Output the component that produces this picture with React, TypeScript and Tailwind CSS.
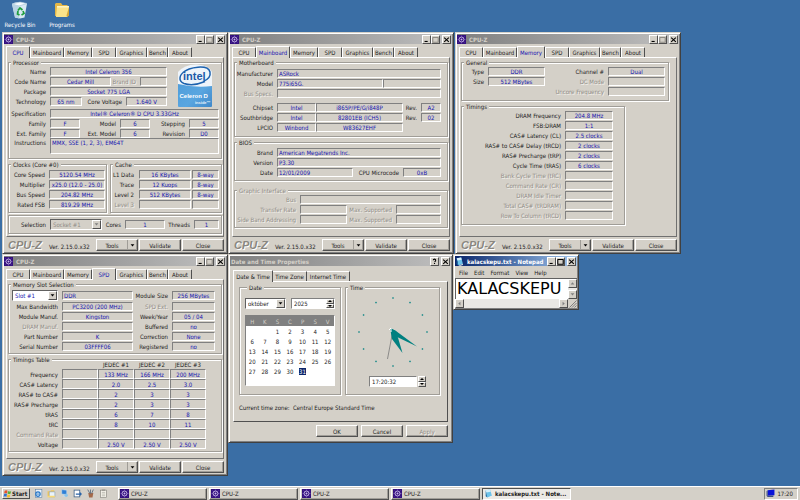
import { useId, type ReactNode } from "react";

const sunken = "border border-t-[#808080] border-l-[#808080] border-r-white border-b-white";
const raised = "border border-t-white border-l-white border-r-[#505050] border-b-[#505050]";
const dim = "text-[#8f8c86] [text-shadow:1px_1px_0_#f4f2ee]";

function CpuIcon() {
  return (
    <svg viewBox="0 0 16 16" className="size-[9px] shrink-0" aria-hidden="true">
      <rect width="16" height="16" fill="#34107e" />
      <circle cx="8" cy="8" r="4.4" fill="none" stroke="#cdbfe8" strokeWidth="1.6" />
      <circle cx="8" cy="8" r="1.7" fill="#c9b8ea" />
      <path d="M8 1v2.500M8 12.500V15M1 8h2.500M12.500 8H15M3 3l2 2M13 3l-2 2M3 13l2-2M13 13l-2-2" stroke="#8a6cc8" strokeWidth="1.2" />
    </svg>
  );
}

function NoteIcon() {
  return (
    <svg viewBox="0 0 16 16" className="size-[9px] shrink-0" aria-hidden="true">
      <path d="M3 2l8-1 3 11-8 3z" fill="#6cc3ea" />
      <path d="M3 2l8-1 1 4-8 1z" fill="#d6f0fb" />
      <path d="M3 2l3 13-3-2z" fill="#1d6fa8" />
      <path d="M7 15l7-3v2l-6 2z" fill="#e8eef2" />
    </svg>
  );
}

function Arrow({ dir = "down", gray = false }: { dir?: "up" | "down" | "left" | "right"; gray?: boolean }) {
  const d = {
    down: "M1 2h6L4 5.500z",
    up: "M1 5.500h6L4 2z",
    left: "M5.500 1v6L2 4z",
    right: "M2.500 1v6L6 4z",
  }[dir];
  return (
    <svg viewBox="0 0 8 8" className="size-[5px]" aria-hidden="true">
      <path d={d} fill={gray ? "#808080" : "#000"} />
    </svg>
  );
}

const glyphs = {
  Minimize: "M2 7h4",
  Maximize: "M1 2h7M1 1.500v6.500h7V1.500",
  Help: "M3 3q0-1.500 1.500-1.500T6 3 4.500 5M4.500 6.500v1.300",
  Close: "M1.500 2l6 5.500M7.500 2l-6 5.500",
};

function TitleButton({ kind, off = false }: { kind: keyof typeof glyphs; off?: boolean }) {
  return (
    <button aria-label={kind} className={`${raised} flex h-[9px] w-[9px] items-center justify-center bg-[#d4d0c8]`}>
      <svg viewBox="0 0 9 9" className="size-[7px]" fill="none" aria-hidden="true">
        <path d={glyphs[kind]} stroke={off ? "#8d8a84" : "#000"} strokeWidth="1.4" />
      </svg>
    </button>
  );
}

type WindowProps = {
  title: string;
  place: string;
  icon?: ReactNode;
  active?: boolean;
  help?: boolean;
  children: ReactNode;
};

function Window({ title, place, icon, active = false, help = false, children }: WindowProps) {
  return (
    <section
      className={`absolute flex flex-col border border-t-[#d4d0c8] border-l-[#d4d0c8] border-r-[#404040] border-b-[#404040] bg-[#d4d0c8] p-px shadow-[inset_1px_1px_0_#fff,inset_-1px_-1px_0_#808080] ${place}`}
    >
      <header
        className={`flex h-2.5 items-center gap-0.5 pr-px font-bold ${
          active
            ? "bg-linear-to-r from-[#0a246a] to-[#a6caf0] text-white"
            : "bg-linear-to-r from-[#808080] to-[#c0c0c0] text-[#d4d0c8]"
        }`}
      >
        {icon}
        <h2 className="flex-1 pl-px">{title}</h2>
        {help ? (
          <TitleButton kind="Help" />
        ) : (
          <div className="flex">
            <TitleButton kind="Minimize" />
            <TitleButton kind="Maximize" off={!active} />
          </div>
        )}
        <TitleButton kind="Close" />
      </header>
      {children}
    </section>
  );
}

type FieldProps = {
  label: string;
  value?: string;
  lw: string;
  w: string;
  off?: boolean;
  left?: boolean;
};

function Field({ label, value = "", lw, w, off = false, left = false }: FieldProps) {
  const id = useId();
  return (
    <>
      <label htmlFor={id} className={`${lw} pr-1 text-right whitespace-nowrap ${off ? dim : ""}`}>
        {label}
      </label>
      <input id={id} readOnly value={value} className={`${sunken} ${w} h-[9px] min-w-0 px-px text-[#1414b0] ${left ? "" : "text-center"}`} />
    </>
  );
}

function Box({ name, value = "", w, left = false }: { name: string; value?: string; w: string; left?: boolean }) {
  return (
    <input aria-label={name} readOnly value={value} className={`${sunken} ${w} h-[9px] min-w-0 px-px text-[#1414b0] ${left ? "" : "text-center"}`} />
  );
}

function Row({ children }: { children: ReactNode }) {
  return <div className="flex h-2.5 items-center">{children}</div>;
}

function Group({ title, off = false, className = "", children }: { title?: string; off?: boolean; className?: string; children: ReactNode }) {
  return (
    <fieldset className={`min-w-0 border border-[#a09d97] shadow-[inset_1px_1px_0_#fff,1px_1px_0_#fff] ${className}`}>
      {title && <legend className={`ml-0.5 bg-[#d4d0c8] px-0.5 ${off ? dim : ""}`}>{title}</legend>}
      {children}
    </fieldset>
  );
}

function Select({ name, value, w, off = false, blue = false }: { name: string; value: string; w: string; off?: boolean; blue?: boolean }) {
  return (
    <span className={`relative flex h-[11px] border border-t-[#606060] border-l-[#606060] border-r-white border-b-white ${w} ${off ? "bg-[#d4d0c8]" : "bg-white"}`}>
      <select aria-label={name} disabled={off} className={`w-full appearance-none pl-0.5 opacity-100 ${off ? "text-[#8f8c86]" : blue ? "text-[#1414b0]" : ""}`}>
        <option>{value}</option>
      </select>
      <span className={`${raised} pointer-events-none absolute top-0 right-0 bottom-0 flex w-[9px] items-center justify-center bg-[#d4d0c8]`}>
        <Arrow gray={off} />
      </span>
    </span>
  );
}

function Spinner({ name }: { name: string }) {
  return (
    <span className="flex w-2 flex-col">
      <button aria-label={`${name} up`} className={`${raised} flex flex-1 items-center justify-center bg-[#d4d0c8]`}>
        <svg viewBox="0 0 4 2" className="h-0.5 w-1" aria-hidden="true"><path d="M0 2h4L2 0z" /></svg>
      </button>
      <button aria-label={`${name} down`} className={`${raised} flex flex-1 items-center justify-center bg-[#d4d0c8]`}>
        <svg viewBox="0 0 4 2" className="h-0.5 w-1" aria-hidden="true"><path d="M0 0h4L2 2z" /></svg>
      </button>
    </span>
  );
}

function Button({ children, off = false }: { children: ReactNode; off?: boolean }) {
  return (
    <button disabled={off} className={`${raised} h-3 w-[42px] shadow-[inset_-1px_-1px_0_#a09d97] ${off ? dim : ""}`}>
      {children}
    </button>
  );
}

const tabs = [
  { name: "CPU", w: "w-6" },
  { name: "Mainboard", w: "w-[34px]" },
  { name: "Memory", w: "w-7" },
  { name: "SPD", w: "w-6" },
  { name: "Graphics", w: "w-[31px]" },
  { name: "Bench", w: "w-[21px]" },
  { name: "About", w: "w-6" },
];

function CpuZ({ tab, place, children }: { tab: string; place: string; children: ReactNode }) {
  return (
    <Window title="CPU-Z" place={`w-[226px] ${place}`} icon={<CpuIcon />}>
      <div className="flex flex-1 flex-col px-0.5 pt-0.5 pb-px">
        <div role="tablist" className="flex items-end">
          {tabs.map((t) => (
            <button
              key={t.name}
              role="tab"
              aria-selected={t.name === tab}
              className={`rounded-t-[1px] border-t border-r border-l border-t-white border-r-[#505050] border-l-white text-center ${t.w} ${
                t.name === tab ? "relative -mb-px h-3 bg-[#d4d0c8] text-[#1414b0]" : "h-2.5"
              }`}
            >
              {t.name}
            </button>
          ))}
        </div>
        <div className="flex min-h-[180px] flex-col gap-0.5 border border-t-white border-l-white border-r-[#707070] border-b-[#707070] px-px pt-px">
          {children}
        </div>
        <footer className="flex items-center gap-px pt-0.5">
          <span className="w-10 pl-0.5 font-['Liberation_Sans'] text-[11px] leading-3 font-bold text-[#8a8780] italic [text-shadow:1px_1px_0_#fff]">
            CPU-Z
          </span>
          <span className="flex-1 pt-0.5 pl-0.5">Ver. 2.15.0.x32</span>
          <div className={`${raised} flex h-3 w-[42px] shadow-[inset_-1px_-1px_0_#a09d97]`}>
            <button className="flex-1">Tools</button>
            <button aria-label="More tools" className="flex w-2.5 items-center justify-center border-l border-[#a09d97]">
              <Arrow />
            </button>
          </div>
          <Button>Validate</Button>
          <Button>Close</Button>
        </footer>
      </div>
    </Window>
  );
}

function IntelLogo() {
  return (
    <svg viewBox="0 0 36 44" className="h-11 w-9" role="img" aria-label="Intel Celeron D inside">
      <defs>
        <linearGradient id="cel" x1="0" y1="0" x2="1" y2="1">
          <stop offset="0" stopColor="#4c9ad8" />
          <stop offset="0.6" stopColor="#5aa6e0" />
          <stop offset="1" stopColor="#3f88c9" />
        </linearGradient>
      </defs>
      <rect x="1" y="9" width="34" height="34" rx="1" fill="url(#cel)" />
      <path d="M1 8Q8 0 20 0.500T35 8v14Q18 24 1 20z" fill="#eef4fa" />
      <path d="M6 8.500C12 3 31 0 33 8c1 5-3 8-7 9.500M8 7C2 11 1 17 7 19.500c6 2 14 1 21-2" fill="none" stroke="#1d62ae" strokeWidth="1.500" />
      <text x="6" y="15.500" fontFamily="Liberation Sans" fontWeight="bold" fontSize="11" fill="#1a5aa8">intel</text>
      <text x="2.500" y="34" fontFamily="Liberation Sans" fontWeight="bold" fontSize="6" fill="#fff">Celeron D</text>
      <text x="18" y="40" fontFamily="Liberation Sans" fontWeight="bold" fontSize="4" fill="#e6f2fc">inside™</text>
    </svg>
  );
}

function CpuPage() {
  return (
    <>
      <Group title="Processor">
        <div className="flex">
          <div className="w-[158px]">
            <Row><Field label="Name" value="Intel Celeron 356" lw="w-[41px]" w="flex-1" /></Row>
            <Row>
              <Field label="Code Name" value="Cedar Mill" lw="w-[41px]" w="w-[61px]" />
              <Field label="Brand ID" off lw="flex-1" w="w-[27px]" />
            </Row>
            <Row><Field label="Package" value="Socket 775 LGA" lw="w-[41px]" w="flex-1" /></Row>
            <Row>
              <Field label="Technology" value="65 nm" lw="w-[41px]" w="w-8" />
              <Field label="Core Voltage" value="1.640 V" lw="flex-1" w="w-[41px]" />
            </Row>
          </div>
          <div className="-mt-0.5 -mb-0.5 flex-1 pl-2.5">
            <IntelLogo />
          </div>
        </div>
        <div className="pt-0.5 pr-0.5 pb-1">
          <Row><Field label="Specification" value="Intel® Celeron® D CPU 3.33GHz" lw="w-[41px]" w="flex-1" /></Row>
          <Row>
            <Field label="Family" value="F" lw="w-[41px]" w="w-[30px]" />
            <Field label="Model" value="6" lw="flex-1" w="w-[30px]" />
            <Field label="Stepping" value="5" lw="w-[39px]" w="w-[30px]" />
          </Row>
          <Row>
            <Field label="Ext. Family" value="F" lw="w-[41px]" w="w-[30px]" />
            <Field label="Ext. Model" value="6" lw="flex-1" w="w-[30px]" />
            <Field label="Revision" value="D0" lw="w-[39px]" w="w-[30px]" />
          </Row>
          <div className="flex">
            <label htmlFor="instr" className="w-[41px] pt-px pr-1 text-right">Instructions</label>
            <textarea
              id="instr"
              readOnly
              rows={2}
              value="MMX, SSE (1, 2, 3), EM64T"
              className={`${sunken} h-4 flex-1 resize-none overflow-hidden px-px text-[#1414b0]`}
            />
          </div>
        </div>
      </Group>
      <div className="flex gap-[3px]">
        <Group title="Clocks (Core #0)" className="w-[99px] pr-px pb-[3px]">
          <div className="pt-px">
            <Row><Field label="Core Speed" value="5120.54 MHz" lw="w-10" w="flex-1" /></Row>
            <Row><Field label="Multiplier" value="x25.0 (12.0 - 25.0)" lw="w-10" w="flex-1" /></Row>
            <Row><Field label="Bus Speed" value="204.82 MHz" lw="w-10" w="flex-1" /></Row>
            <Row><Field label="Rated FSB" value="819.29 MHz" lw="w-10" w="flex-1" /></Row>
          </div>
        </Group>
        <Group title="Cache" className="flex-1 pr-0.5 pb-[3px]">
          <div className="pt-px">
            {[
              ["L1 Data", "16 KBytes", "8-way"],
              ["Trace", "12 Kuops", "8-way"],
              ["Level 2", "512 KBytes", "8-way"],
              ["Level 3", "", ""],
            ].map(([n, size, way]) => (
              <div key={n} className="flex h-2.5 items-center gap-px">
                <Field label={n} value={size} lw="w-[27px]" w="flex-1" off={!size} />
                <Box name={`${n} associativity`} value={way} w="w-[27px]" />
              </div>
            ))}
          </div>
        </Group>
      </div>
      <Group className="py-[3px] pr-0.5">
        <div className="flex items-center">
          <span className="w-[41px] pr-1 text-right">Selection</span>
          <Select name="Selection" value="Socket #1" w="w-[52px]" off />
          <Field label="Cores" value="1" lw="flex-1" w="w-10" />
          <Field label="Threads" value="1" lw="w-[29px]" w="w-[25px]" />
        </div>
      </Group>
    </>
  );
}

function MainboardPage() {
  return (
    <>
      <Group title="Motherboard" className="pr-1.5 pb-1">
        <div className="pt-0.5">
          <Row><Field label="Manufacturer" value="ASRock" left lw="w-[42px]" w="flex-1" /></Row>
          <Row>
            <Field label="Model" value="775i65G." left lw="w-[42px]" w="flex-1" />
            <Box name="Model revision" w="w-[58px]" />
          </Row>
          <Row><Field label="Bus Specs." off lw="w-[42px]" w="flex-1" /></Row>
        </div>
        <div className="pt-1">
          <Row>
            <Field label="Chipset" value="Intel" lw="w-[42px]" w="w-[39px]" />
            <Box name="Chipset model" value="i865P/PE/G/i848P" w="w-[87px]" />
            <Field label="Rev." value="A2" lw="flex-1" w="w-5" />
          </Row>
          <Row>
            <Field label="Southbridge" value="Intel" lw="w-[42px]" w="w-[39px]" />
            <Box name="Southbridge model" value="82801EB (ICH5)" w="w-[87px]" />
            <Field label="Rev." value="02" lw="flex-1" w="w-5" />
          </Row>
          <Row>
            <Field label="LPCIO" value="Winbond" lw="w-[42px]" w="w-[39px]" />
            <Box name="LPCIO model" value="W83627EHF" w="w-[87px]" />
          </Row>
        </div>
      </Group>
      <Group title="BIOS" className="pr-1.5 pb-[3px]">
        <div className="pt-px">
          <Row><Field label="Brand" value="American Megatrends Inc." left lw="w-[42px]" w="flex-1" /></Row>
          <Row><Field label="Version" value="P3.30" left lw="w-[42px]" w="flex-1" /></Row>
          <Row>
            <Field label="Date" value="12/01/2009" left lw="w-[42px]" w="w-[76px]" />
            <Field label="CPU Microcode" value="0xB" lw="flex-1" w="w-[38px]" />
          </Row>
        </div>
      </Group>
      <Group title="Graphic Interface" off className="mt-1 pr-1.5 pb-[3px]">
        <Row><Field label="Bus" off lw="w-[65px]" w="flex-1" /></Row>
        <Row>
          <Field label="Transfer Rate" off lw="w-[65px]" w="w-[47px]" />
          <Field label="Max. Supported" off lw="flex-1" w="w-[45px]" />
        </Row>
        <Row>
          <Field label="Side Band Addressing" off lw="w-[65px]" w="w-[47px]" />
          <Field label="Max. Supported" off lw="flex-1" w="w-[45px]" />
        </Row>
      </Group>
    </>
  );
}

const timings = [
  ["DRAM Frequency", "204.8 MHz"],
  ["FSB:DRAM", "1:1"],
  ["CAS# Latency (CL)", "2.5 clocks"],
  ["RAS# to CAS# Delay (tRCD)", "2 clocks"],
  ["RAS# Precharge (tRP)", "2 clocks"],
  ["Cycle Time (tRAS)", "6 clocks"],
  ["Bank Cycle Time (tRC)", ""],
  ["Command Rate (CR)", ""],
  ["DRAM Idle Timer", ""],
  ["Total CAS# (tRDRAM)", ""],
  ["Row To Column (tRCD)", ""],
];

function MemoryPage() {
  return (
    <>
      <Group title="General" className="mr-1.5 pr-[3px] pb-1">
        <Row>
          <Field label="Type" value="DDR" lw="w-[26px]" w="w-[57px]" />
          <Field label="Channel #" value="Dual" lw="flex-1" w="w-[57px]" />
        </Row>
        <Row>
          <Field label="Size" value="512 MBytes" lw="w-[26px]" w="w-[57px]" />
          <Field label="DC Mode" off lw="flex-1" w="w-[57px]" />
        </Row>
        <Row><Field label="Uncore Frequency" off lw="flex-1" w="w-[57px]" /></Row>
      </Group>
      <Group title="Timings" className="w-[164px] pr-[11px] pb-1">
        {timings.map(([n, v]) => (
          <Row key={n}><Field label={n} value={v} lw="flex-1" w="w-12" off={!v} /></Row>
        ))}
      </Group>
    </>
  );
}

const spdTable = [
  ["Frequency", "133 MHz", "166 MHz", "200 MHz"],
  ["CAS# Latency", "2.0", "2.5", "3.0"],
  ["RAS# to CAS#", "2", "3", "3"],
  ["RAS# Precharge", "2", "3", "3"],
  ["tRAS", "6", "7", "8"],
  ["tRC", "8", "10", "11"],
  ["Command Rate", "", "", ""],
  ["Voltage", "2.50 V", "2.50 V", "2.50 V"],
];

function SpdPage() {
  return (
    <>
      <Group title="Memory Slot Selection" className="pr-1.5 pb-0.5">
        <div className="pt-0.5">
          <div className="flex items-center pl-[3px]">
            <Select name="Memory slot" value="Slot #1" w="w-[46px]" blue />
            <span className="w-1" />
            <Box name="Memory type" value="DDR" left w="flex-1" />
            <Field label="Module Size" value="256 MBytes" lw="w-[39px]" w="w-[43px]" />
          </div>
          {[
            ["Max Bandwidth", "PC3200 (200 MHz)", "SPD Ext.", ""],
            ["Module Manuf.", "Kingston", "Week/Year", "05 / 04"],
            ["DRAM Manuf.", "", "Buffered", "no"],
            ["Part Number", "K", "Correction", "None"],
            ["Serial Number", "03FFFF06", "Registered", "no"],
          ].map(([a, b, c, d]) => (
            <Row key={a}>
              <Field label={a} value={b} off={!b} lw="w-[53px]" w="flex-1" />
              <Field label={c} value={d} off={!d} lw="w-[39px]" w="w-[43px]" />
            </Row>
          ))}
        </div>
      </Group>
      <Group title="Timings Table" className="pb-0.5">
        <table className="-mt-[3px] border-separate border-spacing-0">
          <thead>
            <tr className="h-[9px]">
              <td className="w-[53px]" />
              <td className="w-9" />
              {["JEDEC #1", "JEDEC #2", "JEDEC #3"].map((h) => (
                <th key={h} className="w-9 font-normal whitespace-nowrap">{h}</th>
              ))}
            </tr>
          </thead>
          <tbody>
            {spdTable.map(([name, ...cells]) => (
              <tr key={name} className="h-2.5">
                <th className={`pr-1 text-right font-normal whitespace-nowrap ${cells[0] ? "" : dim}`}>{name}</th>
                {["", ...cells].map((c, i) => (
                  <td key={i} className={`${sunken} p-0 text-center whitespace-nowrap text-[#1414b0]`}>{c}</td>
                ))}
              </tr>
            ))}
          </tbody>
        </table>
      </Group>
    </>
  );
}

const days = [
  ["", "", "1", "2", "3", "4", "5"],
  ["6", "7", "8", "9", "10", "11", "12"],
  ["13", "14", "15", "16", "17", "18", "19"],
  ["20", "21", "22", "23", "24", "25", "26"],
  ["27", "28", "29", "30", "31", "", ""],
];

function Clock() {
  const dots = Array.from({ length: 12 }, (_, i) => {
    const a = (i * Math.PI) / 6;
    return [39 + 34 * Math.sin(a), 39 - 34 * Math.cos(a)];
  });
  return (
    <svg viewBox="0 0 78 78" className="size-[78px]" role="img" aria-label="Clock">
      {dots.map(([x, y], i) => (
        <rect key={i} x={x - 0.7} y={y - 0.7} width="1.4" height="1.4" fill="#008080" />
      ))}
      <path d="M39 37L33.500 66" stroke="#777" strokeWidth="0.8" />
      <path d="M36 35L42 38L63 53.500L41 43z" fill="#008080" />
      <path d="M36 35L42 38L48.500 60L38 46z" fill="#008080" />
      <path d="M35 37l2-2v4" fill="none" stroke="#fff" strokeWidth="1" />
    </svg>
  );
}

function DateTime() {
  return (
    <Window title="Date and Time Properties" place="top-[254px] left-[228px] w-[225px]" help>
      <div className="px-[3px] pt-1 pb-1">
        <div role="tablist" className="flex items-end">
          <button role="tab" aria-selected="true" className="relative -mb-px h-3 w-10 border-t border-r border-l border-t-white border-r-[#505050] border-l-white bg-[#d4d0c8]">
            Date &amp; Time
          </button>
          <button role="tab" aria-selected="false" className="h-2.5 w-[34px] border-t border-r border-t-white border-r-[#505050]">Time Zone</button>
          <button role="tab" aria-selected="false" className="h-2.5 w-[43px] border-t border-r border-t-white border-r-[#505050]">Internet Time</button>
        </div>
        <div className="border border-t-white border-l-white border-r-[#505050] border-b-[#505050] px-[5px] pt-0.5">
          <div className="flex gap-1">
            <Group title="Date" className="w-[102px] px-[5px] pb-2">
              <div className="flex justify-between pt-[7px]">
                <Select name="Month" value="október" w="w-[41px]" />
                <span className={`${sunken} flex h-[11px] w-11 bg-white`}>
                  <input aria-label="Year" defaultValue="2025" className="min-w-0 flex-1 pl-0.5" />
                  <Spinner name="Year" />
                </span>
              </div>
              <div className={`${sunken} mt-1.5 min-h-[71px] bg-white`}>
                <table className="w-full table-fixed border-separate border-spacing-0 text-center">
                  <thead className="bg-[#808080] text-[#d4d0c8]">
                    <tr className="h-2.5">
                      {["H", "K", "S", "C", "P", "S", "V"].map((d, i) => (
                        <th key={i} className="font-normal">{d}</th>
                      ))}
                    </tr>
                  </thead>
                  <tbody>
                    {days.map((week, i) => (
                      <tr key={i} className="h-2.5">
                        {week.map((d, j) => (
                          <td key={j} className="p-0">
                            <span className={d === "31" ? "bg-[#0a246a] text-white" : ""}>{d}</span>
                          </td>
                        ))}
                      </tr>
                    ))}
                  </tbody>
                </table>
              </div>
            </Group>
            <Group title="Time" className="w-[95px]">
              <div className="flex flex-col items-center pt-0.5">
                <Clock />
                <div className="mt-[5px] ml-2.5 flex h-[11px] gap-px">
                  <input aria-label="Time of day" defaultValue="17:20:32" className={`${sunken} w-12 bg-white pl-0.5`} />
                  <Spinner name="Time" />
                </div>
              </div>
            </Group>
          </div>
          <p className="pt-[9px] pb-2.5">Current time zone:&nbsp; Central Europe Standard Time</p>
        </div>
        <div className="flex justify-end gap-[3px] pt-[3px]">
          <Button>OK</Button>
          <Button>Cancel</Button>
          <Button off>Apply</Button>
        </div>
      </div>
    </Window>
  );
}

function ScrollButton({ dir }: { dir: "up" | "down" | "left" | "right" }) {
  return (
    <button aria-label={`Scroll ${dir}`} className={`${raised} flex size-[9px] items-center justify-center bg-[#d4d0c8]`}>
      <Arrow dir={dir} gray />
    </button>
  );
}

function Notepad() {
  return (
    <Window title="kalacskepu.txt - Notepad" place="top-[254px] left-[453px] w-[126px]" icon={<NoteIcon />} active>
      <nav className="flex h-3 items-center gap-1.5 pl-1">
        {["File", "Edit", "Format", "View", "Help"].map((m) => (
          <button key={m}>{m}</button>
        ))}
      </nav>
      <div className="flex border-t border-l border-[#606060]">
        <textarea
          aria-label="Text"
          rows={1}
          defaultValue="KALACSKEPU"
          className="h-5 min-w-0 flex-1 resize-none overflow-hidden bg-white pl-px font-['DejaVu_Sans'] text-[16px] leading-5 text-black"
        />
        <div className="flex flex-col justify-between bg-[#eae8e4]">
          <ScrollButton dir="up" />
          <ScrollButton dir="down" />
        </div>
      </div>
      <div className="flex">
        <div className="flex flex-1 justify-between bg-[#eae8e4]">
          <ScrollButton dir="left" />
          <ScrollButton dir="right" />
        </div>
        <svg viewBox="0 0 9 9" className="size-[9px]" aria-hidden="true">
          <path d="M8.500 1.500l-7 7M8.500 4l-4.500 4.500M8.500 6.500l-2 2" stroke="#808080" />
        </svg>
      </div>
    </Window>
  );
}

function DesktopIcons() {
  return (
    <nav className="flex pt-px text-center text-white">
      <a href="#" className="flex w-10 flex-col items-center gap-0.5">
        <svg viewBox="0 0 18 18" className="size-[18px]" aria-hidden="true">
          <path d="M1 3l3-1.500L9 1l7 1.500-2.500 14L9 17.500l-5-1z" fill="#d8e9f3" />
          <path d="M1 3l7 2 8-2.500L9 1z" fill="#f6fbff" stroke="#9dbdd2" strokeWidth="0.6" />
          <path d="M1 3l3 13.500 4 1L8 5z" fill="#b8d3e4" />
          <path d="M7 9.500l2-2.500 2.500 2M12 10l1 2.500-2.500 1.500M8.500 14L6.500 13l.5-3" fill="none" stroke="#1e9e3c" strokeWidth="1.700" />
        </svg>
        Recycle Bin
      </a>
      <a href="#" className="flex w-11 flex-col items-center gap-0.5">
        <svg viewBox="0 0 18 18" className="size-[18px]" aria-hidden="true">
          <path d="M2 3l1-1h5l1.500 2H14l1 1v10H2z" fill="#e3b748" />
          <path d="M4 5h12v9l-2 2H3z" fill="#fbe38a" />
          <path d="M4 5h12v1.500H4z" fill="#fff5c4" />
          <path d="M16 6v8.500L14 16l-.5-1.500z" fill="#d5a637" />
        </svg>
        Programs
      </a>
    </nav>
  );
}

function StartFlag() {
  return (
    <svg viewBox="0 0 16 16" className="size-[9px]" aria-hidden="true">
      <path d="M3 3q3-2 5 0L7 8Q4.500 6 2 8z" fill="#e8502a" />
      <path d="M9 3.500q3 2 5.500 0L13.500 8Q11 10 8 8z" fill="#5aae3a" />
      <path d="M2 9q2.500-2 5 0l-1 5q-2.500-2-5 0z" fill="#2f6fd0" />
      <path d="M8 9.500q2.500 2 5 0l-1 4.500q-2.500 2-5 0z" fill="#f4be2a" />
    </svg>
  );
}

const launchers = [
  {
    name: "Browser",
    art: <><rect x="3" y="1" width="11" height="14" fill="#e9f1f8" stroke="#5b7fa6" /><circle cx="7" cy="9" r="4" fill="none" stroke="#2778c8" strokeWidth="2" /><path d="M4 9h7" stroke="#2778c8" strokeWidth="1.500" /></>,
  },
  {
    name: "Explorer",
    art: <><path d="M1 4h5l1-2h6v11H1z" fill="#efc65a" /><path d="M4 5h10v9H4z" fill="#eaf3fb" stroke="#7f9ab5" /><path d="M1 12h13v3H1z" fill="#f7d877" /></>,
  },
  {
    name: "Computer",
    art: <><path d="M3 1l9 1v8l-9-1z" fill="#2f7fd6" stroke="#cfe0ef" /><path d="M6 10h4l2 4H4z" fill="#c9d6e0" /><circle cx="11" cy="11" r="3" fill="#8dc4ea" /></>,
  },
  {
    name: "Show desktop",
    art: <><rect x="2" y="2" width="10" height="12" fill="#fff" stroke="#46688e" strokeWidth="1.500" /><path d="M5 8h7V5l4 4-4 4v-3H5z" fill="#2a64a8" /></>,
  },
  {
    name: "Cleaner",
    art: <><path d="M4 7h9l-1.500 8h-6z" fill="#a56a4a" /><path d="M3 1l4 7M8 1v7M13 1l-3 7" stroke="#5d6f80" strokeWidth="1.600" /></>,
  },
  {
    name: "Notes",
    art: <><rect x="3" y="2" width="10" height="13" fill="#f5f3ea" stroke="#7c7a74" /><path d="M5 6h6M5 9h6M5 12h6" stroke="#9a9890" /><path d="M5 1h6v2H5z" fill="#8f8d86" /></>,
  },
];

function Taskbar() {
  return (
    <footer className="flex h-3.5 items-center border-t border-white bg-[#d4d0c8] px-0.5">
      <button className={`${raised} flex h-[11px] w-7 items-center font-bold`}>
        <StartFlag />
        Start
      </button>
      <div className="flex w-22 items-center gap-1 pl-1">
        {launchers.map((l) => (
          <button key={l.name} aria-label={l.name}>
            <svg viewBox="0 0 16 16" className="block size-[9px]" aria-hidden="true">{l.art}</svg>
          </button>
        ))}
      </div>
      <div className="flex gap-0.5">
        {[1, 2, 3, 4].map((n) => (
          <button key={n} className={`${raised} flex h-3 w-[89px] items-center gap-0.5 pl-px shadow-[inset_-1px_-1px_0_#a09d97]`}>
            <CpuIcon />
            CPU-Z
          </button>
        ))}
        <button className="flex h-3 w-[89px] items-center gap-0.5 border border-t-[#505050] border-l-[#505050] border-r-white border-b-white bg-[#ebe9e5] pl-px font-bold">
          <NoteIcon />
          kalacskepu.txt - Note...
        </button>
      </div>
      <div className={`${sunken} ml-auto flex h-3 w-[34px] items-center justify-between pr-1 pl-px`}>
        <svg viewBox="0 0 16 16" className="size-[9px]" aria-hidden="true">
          <path d="M3 2l12-1v10l-12 1z" fill="#0a12d8" />
          <path d="M1 4l2-2v10l10-.5V14H3l-2-2z" fill="#3a4a86" />
        </svg>
        17:20
      </div>
    </footer>
  );
}

export default function App() {
  return (
    <div className="relative flex min-h-screen flex-col overflow-hidden bg-[#3a6ea5] font-['DejaVu_Sans_Condensed','DejaVu_Sans',sans-serif] text-[6px] leading-[7px] text-[#1c1c1c]">
      <main className="flex-1">
        <DesktopIcons />
        <CpuZ tab="CPU" place="top-8 left-0.5"><CpuPage /></CpuZ>
        <CpuZ tab="Mainboard" place="top-8 left-[228px]"><MainboardPage /></CpuZ>
        <CpuZ tab="Memory" place="top-8 left-[455px]"><MemoryPage /></CpuZ>
        <CpuZ tab="SPD" place="top-[254px] left-0.5"><SpdPage /></CpuZ>
        <DateTime />
        <Notepad />
      </main>
      <Taskbar />
    </div>
  );
}
